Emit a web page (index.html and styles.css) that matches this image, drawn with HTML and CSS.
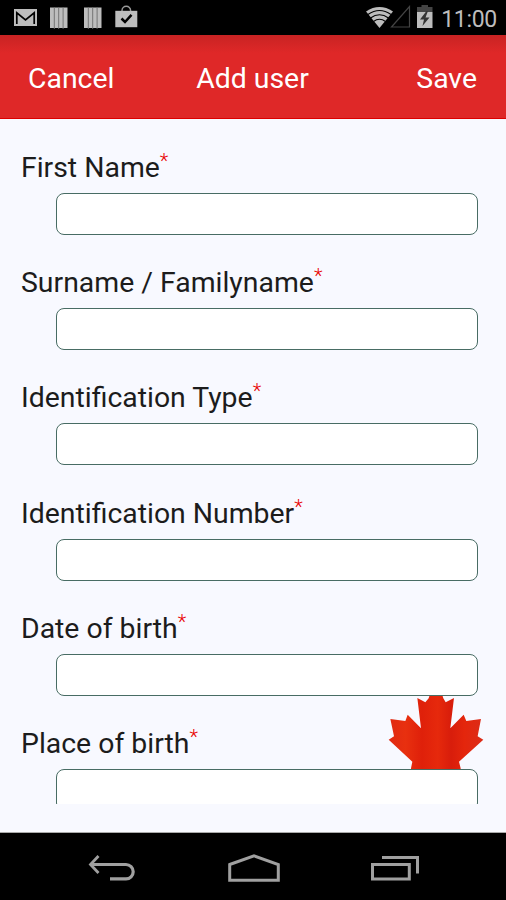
FILE: index.html
```html
<!DOCTYPE html>
<html lang="en">
<head>
    <meta charset="UTF-8">
    <meta name="viewport" content="width=device-width, initial-scale=1.0">
    <title>Add user</title>
    <link rel="stylesheet" href="styles.css">
</head>
<body>
    <div class="status-bar">
        <div class="status-left">
            <!-- Mail -->
            <svg width="23" height="17" viewBox="0 0 23 17">
                <rect width="23" height="17" fill="#bdbdbd"/>
                <path d="M2.800 15V3.800L11.500 11L20.200 3.800V15" fill="none" stroke="#000" stroke-width="1.700"/>
            </svg>
            <!-- Notifications -->
            <svg class="bars" width="18" height="22" viewBox="0 0 18 22">
                <path d="M0 .5h17.500v20.500H0z" fill="#bdbdbd"/>
                <path d="M4.300 0v22M8.700 0v22M13.100 0v22" stroke="#6c6c6c" stroke-width=".9"/>
            </svg>
            <svg class="bars" width="18" height="22" viewBox="0 0 18 22">
                <path d="M0 .5h17.500v20.500H0z" fill="#bdbdbd"/>
                <path d="M4.300 0v22M8.700 0v22M13.100 0v22" stroke="#6c6c6c" stroke-width=".9"/>
            </svg>
            <!-- Store -->
            <svg class="bag" width="23" height="23" viewBox="0 0 23 23">
                <path d="M7 6.500V5.500a4.300 4.300 0 0 1 8.600 0V6.500" fill="none" stroke="#999" stroke-width="1.400"/>
                <path d="M.3 5.800h22v16.400h-22z" fill="#bdbdbd"/>
                <path d="M6.500 13.500L10 17L16.500 9.800" fill="none" stroke="#000" stroke-width="2.500"/>
            </svg>
        </div>
        <div class="status-right">
            <!-- Wifi -->
            <svg width="27" height="21" viewBox="0 0 27 21">
                <path d="M0 4.500Q13.500 -4.300 27 4.500L13.500 21z" fill="#bdbdbd"/>
                <path d="M2 7.500Q13.500 -.5 25 7.500M4.500 11Q13.500 4.500 22.500 11M7.500 14.500Q13.500 10 19.500 14.500" fill="none" stroke="#000" stroke-width="1.100"/>
            </svg>
            <!-- Signal -->
            <svg class="signal" width="21" height="23" viewBox="0 0 21 23">
                <path d="M1.500 22L19.500 1.500V22z" fill="none" stroke="#444" stroke-width="1.200"/>
            </svg>
            <!-- Battery -->
            <svg class="battery" width="16" height="23" viewBox="0 0 16 23">
                <path d="M4.500 0h6.500v2h4.500v5H0V2h4.500z" fill="#444"/>
                <path d="M0 7h15.500v16H0z" fill="#bdbdbd"/>
                <path d="M9.500 6L3 14.500H7L5.500 21L12.500 12.500H8.500L11 6z" fill="#333"/>
            </svg>
            <span class="clock">11:00</span>
        </div>
    </div>

    <div class="header">
        <a class="cancel">Cancel</a>
        <span class="title">Add user</span>
        <a class="save">Save</a>
    </div>

    <div class="form">
        <svg class="leaf" width="96" height="77.300" viewBox="36 160 288 232">
            <defs>
                <linearGradient id="leafRed" x1="0" x2="1" y1="0" y2="0">
                    <stop offset="0" stop-color="#e02a12"/>
                    <stop offset=".18" stop-color="#e8300f"/>
                    <stop offset=".35" stop-color="#df200a"/>
                    <stop offset=".52" stop-color="#e6290c"/>
                    <stop offset=".66" stop-color="#d81d0b"/>
                    <stop offset=".8" stop-color="#e4260c"/>
                    <stop offset="1" stop-color="#dc2c18"/>
                </linearGradient>
            </defs>
            <path d="M105 392V386L109 366L38 300L54 290L43 238L88 244L95 225L135 266L124 175L148 188L158 176L163 160H197L202 176L209 188L234 175L223 266L263 225L271 244L315 238L305 290L322 300L249 366L254 386V392z" fill="url(#leafRed)"/>
        </svg>
        <div class="field">
            <label for="firstName">First Name<sup>*</sup></label>
            <input type="text" id="firstName">
        </div>
        <div class="field">
            <label for="surname">Surname / Familyname<sup>*</sup></label>
            <input type="text" id="surname">
        </div>
        <div class="field">
            <label for="idType">Identification Type<sup>*</sup></label>
            <input type="text" id="idType">
        </div>
        <div class="field">
            <label for="idNumber">Identification Number<sup>*</sup></label>
            <input type="text" id="idNumber">
        </div>
        <div class="field">
            <label for="birthDate">Date of birth<sup>*</sup></label>
            <input type="text" id="birthDate">
        </div>
        <div class="field">
            <label for="birthPlace">Place of birth<sup>*</sup></label>
            <input type="text" id="birthPlace">
        </div>
    </div>

    <div class="nav-bar">
        <svg width="48" height="26" viewBox="0 0 48 26">
            <path d="M2 9.500H38a7.200 7.200 0 0 1 0 14.400H22" fill="none" stroke="#a0a0a0" stroke-width="3.200"/>
            <path d="M10.500 1L2.500 9.500L10.500 18" fill="none" stroke="#a0a0a0" stroke-width="2.800"/>
        </svg>
        <svg width="52" height="28" viewBox="0 0 52 28">
            <path d="M1.700 10.500L26 1.800L50.300 10.500V26.200H1.700z" fill="none" stroke="#a0a0a0" stroke-width="3"/>
        </svg>
        <svg width="48" height="26" viewBox="0 0 48 26">
            <path d="M1.500 9.500H38.300V23.900H1.500z" fill="none" stroke="#a0a0a0" stroke-width="3"/>
            <path d="M11 2.500H46.500V18.500" fill="none" stroke="#a0a0a0" stroke-width="3"/>
        </svg>
    </div>
</body>
</html>
```

FILE: styles.css
```css
* {
    box-sizing: border-box;
}
body {
    margin: 0;
    height: 900px;
    display: flex;
    flex-direction: column;
    overflow: hidden;
    background-color: #f8f9ff;
    font-family: Roboto, sans-serif;
}
svg {
    display: block;
    flex-shrink: 0;
}
.status-bar {
    height: 35px;
    display: flex;
    justify-content: space-between;
    background-color: #000;
    padding: 0 9px 0 14px;
}
.status-left {
    display: flex;
    align-items: flex-start;
    padding-top: 9px;
}
.bars {
    margin: -2px 0 0 13px;
}
.bars + .bars {
    margin-left: 16px;
}
.bag {
    margin: -4px 0 0 13px;
}
.status-right {
    display: flex;
    align-items: flex-start;
    padding-top: 7px;
}
.signal {
    margin: -2px 0 0 -3px;
}
.battery {
    margin: -2px 8px 0 6px;
}
.clock {
    color: #bdbdbd;
    font-size: 23px;
    line-height: 27px;
    margin-top: -1px;
    letter-spacing: -0.3px;
}
.header {
    height: 84px;
    display: grid;
    grid-template-columns: 1fr auto 1fr;
    align-items: center;
    padding: 4px 29px 0 28px;
    background: linear-gradient(#c82323, #df2828 18px);
    border-bottom: 1px solid #dc0000;
    color: #fff;
    font-size: 28.4px;
}
.save {
    text-align: right;
}
.form {
    position: relative;
    height: 685px;
    padding: 32px 28px 0 22px;
    overflow: hidden;
}
.leaf {
    position: absolute;
    left: 388px;
    top: 574px;
}
.field {
    position: relative;
    height: 115.2px;
}
.field label {
    display: block;
    height: 33px;
    line-height: 34px;
    margin-left: -1px;
    font-size: 28.4px;
    color: #1c1c1c;
    white-space: nowrap;
}
.field sup {
    color: #e80000;
    font-size: 20px;
    font-weight: 300;
    line-height: 0;
    vertical-align: 9px;
}
.field input {
    display: block;
    width: 422px;
    height: 42px;
    margin: 9px 0 0 34px;
    padding: 0 10px;
    background-color: #fff;
    border: 1px solid #486c64;
    border-radius: 8px;
    font-family: inherit;
    font-size: 24px;
}
.nav-bar {
    height: 68px;
    margin-top: auto;
    display: flex;
    justify-content: space-between;
    align-items: center;
    padding: 2px 87px 0 88px;
    background-color: #000;
    border-top: 1px solid #aaa;
}
```
